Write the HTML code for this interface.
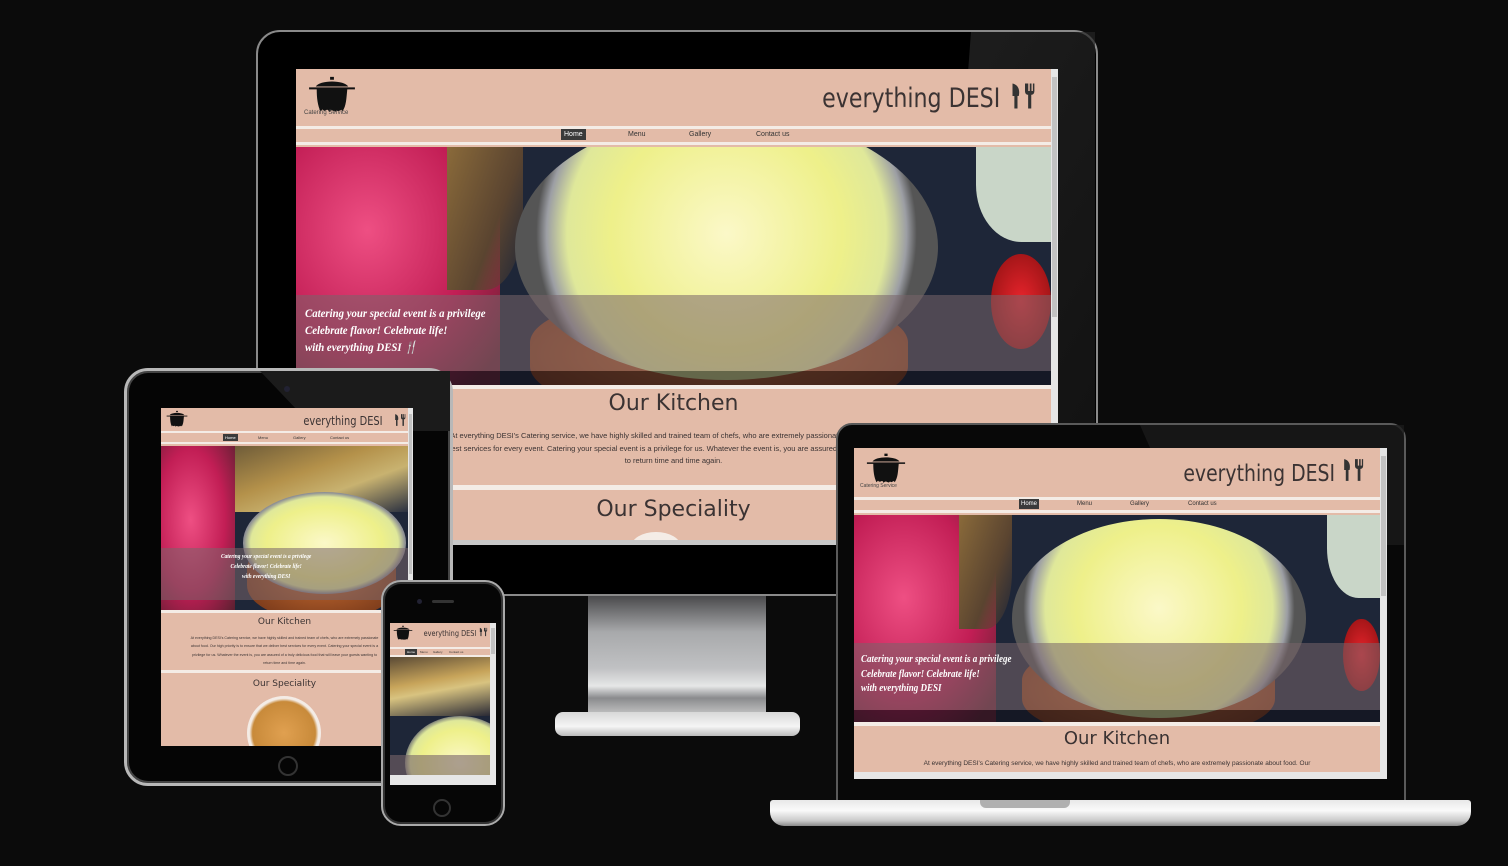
<!DOCTYPE html>
<html><head><meta charset="utf-8">
<style>
*{margin:0;padding:0;box-sizing:border-box}
body{width:1508px;height:866px;overflow:hidden;background:#0b0b0b;position:relative;font-family:"Liberation Sans",sans-serif}
.abs{position:absolute}
.scr{position:absolute;background:#e3bba8;overflow:hidden}
.wl{position:absolute;left:0;right:0;background:#f4ece6}
.title{position:absolute;font-family:"DejaVu Sans","Liberation Sans",sans-serif;color:#3b3333;white-space:nowrap;transform:scaleX(.82);transform-origin:right center}
.nav span{position:absolute;color:#333;white-space:nowrap}
.nav .home{background:#3a3a3a;color:#fff}
.hero{position:absolute;left:0;right:0;overflow:hidden;background:#1e2638}
.hero div{position:absolute}
.cap{font-family:"Liberation Serif",serif;font-style:italic;font-weight:bold;color:#fff;white-space:nowrap;position:absolute;transform:scaleX(.9);transform-origin:left center}
.txt{position:absolute;left:0;right:0;text-align:center;color:#3b3333;white-space:nowrap;overflow:hidden}
.sb{position:absolute;background:#e6e6e6}
</style></head><body>

<svg width="0" height="0" style="position:absolute">
<defs>
<symbol id="pot" viewBox="0 0 50 44"><path d="M23 2h4v3h-4z M8 12 C12 5 38 5 42 12 Z M1 13h48v2H1z M9 15h32 C40 25 40 32 36 38 C34 34 33 40 30 37 C28 41 25 34 22 39 C20 33 18 40 15 36 L13 38 C10 32 9 24 9 15Z" fill="#111"/></symbol>
<symbol id="fk" viewBox="0 0 24 24"><path d="M2 2 C7 3 8 8 7 12 H6 V22 H3.5 V12 H2Z M12 2 V8 C12 10 13 11 14.5 11 V22 H17 V11 C18.5 11 19.5 10 19.5 8 V2 H18.3 V8 H17.2 V2 H15.8 V8 H14.6 V2Z" fill="#333"/></symbol>
</defs></svg>

<!-- Monitor -->
<div class="abs" style="left:256px;top:30px;width:842px;height:566px;border-radius:24px 24px 4px 4px;background:#000;border:2px solid #8a8a8a"></div>
<div class="abs" style="left:940px;top:32px;width:155px;height:420px;background:linear-gradient(120deg,#2a2a2a,#1a1a1a);clip-path:polygon(20% 0,100% 0,100% 100%,0 100%);opacity:.7"></div>
<div class="abs" style="left:588px;top:596px;width:178px;height:120px;background:linear-gradient(#4a4a4c,#a8a9ab 30%,#c0c1c3 60%,#e6e7e7 75%,#8a8b8d 85%,#c8c8c8)"></div>
<div class="abs" style="left:555px;top:712px;width:245px;height:24px;border-radius:8px;background:linear-gradient(#d8d8d8,#f5f5f5 60%,#bbb)"></div>

<!-- Desktop screen -->
<div class="scr" style="left:296px;top:69px;width:762px;height:476px">
 <div class="sb" style="right:0;top:0;width:7px;height:476px"><div class="abs" style="left:1px;top:8px;width:5px;height:240px;background:#c2c2c2"></div></div>
 <svg class="abs" style="left:12px;top:6px" width="48" height="42"><use href="#pot"/></svg>
 <div class="abs" style="left:8px;top:41px;font-size:6px;color:#444">Catering Service</div>
 <div class="title" style="right:58px;top:14px;font-size:27px">everything DESI</div>
 <svg class="abs" style="left:714px;top:12px" width="30" height="30"><use href="#fk"/></svg>
 <div class="wl" style="top:57px;height:3px;right:7px"></div>
 <div class="nav">
  <span class="home" style="left:265px;top:60px;font-size:7px;padding:2px 3px">Home</span>
  <span style="left:332px;top:62px;font-size:7px">Menu</span>
  <span style="left:393px;top:62px;font-size:7px">Gallery</span>
  <span style="left:460px;top:62px;font-size:7px">Contact us</span>
 </div>
 <div class="wl" style="top:73px;height:3px;right:7px"></div>
 <div class="hero" style="top:78px;height:238px;right:7px">
  <div style="left:0;top:0;width:27%;height:100%;background:radial-gradient(ellipse at 35% 35%,#ee4f83,#c21e55 55%,#6b2335 90%)"></div>
  <div style="left:20%;top:0;width:10%;height:60%;background:linear-gradient(110deg,#8a6a3a,#5a4430 60%,transparent);border-radius:0 0 50% 0"></div>
  <div style="right:0;top:0;width:10%;height:40%;background:#c9d6c8;border-radius:0 0 0 60%"></div>
  <div style="right:0;top:45%;width:8%;height:40%;background:radial-gradient(#e8242c,#8a1010);border-radius:50%"></div>
  <div style="left:31%;top:62%;width:50%;height:50%;background:radial-gradient(#c46a30,#7a3516);border-radius:40%"></div>
  <div style="left:29%;top:-14%;width:56%;height:112%;border-radius:50%;background:radial-gradient(circle at 50% 45%,#fbf8c8,#eef08a 45%,#dfe89a 62%,#9c9ea4 70%,#555 74%);"></div>
  <div style="left:0;top:62%;width:100%;height:32%;background:rgba(120,100,105,.55)"></div>
  <div style="left:0;top:94%;width:100%;height:6%;background:rgba(15,15,25,.6)"></div>
  <div class="cap" style="left:9px;top:158px;font-size:12px;line-height:17px">Catering your special event is a privilege<br>Celebrate flavor! Celebrate life!<br>with everything DESI &#x1F374;</div>
 </div>
 <div class="wl" style="top:316px;height:4px;right:7px"></div>
 <div class="txt" style="top:322px;font-size:22px;font-family:'DejaVu Sans',sans-serif;right:7px">Our Kitchen</div>
 <div class="txt" style="top:361px;font-size:7.5px;line-height:12.5px;right:7px">At everything DESI's Catering service, we have highly skilled and trained team of chefs, who are extremely passionate about food. Our<br>high priority is to ensure that we deliver best services for every event. Catering your special event is a privilege for us. Whatever the event is, you are assured of a truly delicious food that will leave your guests wanting<br>to return time and time again.</div>
 <div class="wl" style="top:416px;height:5px;right:7px"></div>
 <div class="txt" style="top:428px;font-size:22px;font-family:'DejaVu Sans',sans-serif;right:7px">Our Speciality</div>
 <div class="abs" style="left:335px;top:463px;width:50px;height:30px;border-radius:50%;background:#f4ece6"></div>
 <div class="abs" style="left:0;top:471px;width:762px;height:5px;background:#c8c8c8"></div>
</div>

<!-- Tablet -->
<div class="abs" style="left:124px;top:368px;width:329px;height:418px;border-radius:24px;background:#050505;border:3px solid #b8b8b8;box-shadow:inset 0 0 0 2px #444"></div>
<div class="abs" style="left:260px;top:371px;width:190px;height:60px;background:#1b1b1b;clip-path:polygon(0 0,100% 0,100% 100%,30% 100%)"></div>
<div class="abs" style="left:284px;top:386px;width:6px;height:6px;border-radius:50%;background:#223"></div>
<div class="abs" style="left:278px;top:756px;width:20px;height:20px;border-radius:50%;border:2px solid #333"></div>
<div class="scr" style="left:161px;top:408px;width:252px;height:338px">
 <div class="sb" style="right:0;top:0;width:5px;height:338px"><div class="abs" style="left:1px;top:6px;width:3px;height:160px;background:#c2c2c2"></div></div>
 <svg class="abs" style="left:5px;top:2px" width="22" height="19"><use href="#pot"/></svg>
 <div class="title" style="right:30px;top:6px;font-size:12px">everything DESI</div>
 <svg class="abs" style="left:233px;top:5px" width="14" height="14"><use href="#fk"/></svg>
 <div class="wl" style="top:23px;height:2px;right:5px"></div>
 <div class="nav">
  <span class="home" style="left:62px;top:26px;font-size:4px;padding:1px 2px">Home</span>
  <span style="left:97px;top:27px;font-size:4px">Menu</span>
  <span style="left:132px;top:27px;font-size:4px">Gallery</span>
  <span style="left:169px;top:27px;font-size:4px">Contact us</span>
 </div>
 <div class="wl" style="top:34px;height:2px;right:5px"></div>
 <div class="hero" style="top:38px;height:164px;right:5px">
  <div style="left:0;top:0;width:100%;height:40%;background:linear-gradient(160deg,#4a4030,#b4914a 50%,#c8b270 70%,#2a3040)"></div>
  <div style="left:0;top:0;width:30%;height:100%;background:radial-gradient(ellipse at 40% 45%,#ee4f83,#c21e55 55%,#5a2030)"></div>
  <div style="left:35%;top:55%;width:60%;height:50%;background:radial-gradient(#c46a30,#6a3016);border-radius:40%"></div>
  <div style="left:33%;top:28%;width:66%;height:62%;border-radius:50%;background:radial-gradient(#fbf8c8,#eef08a 50%,#dfe89a 64%,#8c8e94 70%)"></div>
  <div style="left:0;top:62%;width:100%;height:32%;background:rgba(120,100,105,.55)"></div>
  <div class="cap" style="left:60px;top:106px;font-size:6px;line-height:10px;text-align:center">Catering your special event is a privilege<br>Celebrate flavor! Celebrate life!<br>with everything DESI</div>
 </div>
 <div class="wl" style="top:202px;height:3px;right:5px"></div>
 <div class="txt" style="top:209px;font-size:9px;font-family:'DejaVu Sans',sans-serif;right:5px">Our Kitchen</div>
 <div class="txt" style="top:226px;font-size:3.6px;line-height:8.3px;right:5px">At everything DESI's Catering service, we have highly skilled and trained team of chefs, who are extremely passionate<br>about food. Our high priority is to ensure that we deliver best services for every event. Catering your special event is a<br>privilege for us. Whatever the event is, you are assured of a truly delicious food that will leave your guests wanting to<br>return time and time again.</div>
 <div class="wl" style="top:262px;height:3px;right:5px"></div>
 <div class="txt" style="top:271px;font-size:9px;font-family:'DejaVu Sans',sans-serif;right:5px">Our Speciality</div>
 <div class="abs" style="left:86px;top:288px;width:74px;height:74px;border-radius:50%;background:radial-gradient(#e0a050,#c88a3a 60%,#f4ece6 66%)"></div>
</div>

<!-- Phone -->
<div class="abs" style="left:381px;top:580px;width:124px;height:246px;border-radius:20px;background:#060606;border:2px solid #aaa;box-shadow:inset 0 0 0 2px #333"></div>
<div class="abs" style="left:417px;top:599px;width:5px;height:5px;border-radius:50%;background:#223"></div>
<div class="abs" style="left:432px;top:600px;width:22px;height:3px;border-radius:2px;background:#333"></div>
<div class="abs" style="left:433px;top:799px;width:18px;height:18px;border-radius:50%;border:2px solid #333"></div>
<div class="scr" style="left:390px;top:623px;width:106px;height:162px">
 <div class="sb" style="right:0;top:0;width:6px;height:162px"><div class="abs" style="left:1px;top:5px;width:4px;height:26px;background:#c2c2c2"></div></div>
 <svg class="abs" style="left:3px;top:2px" width="20" height="17"><use href="#pot"/></svg>
 <div class="title" style="right:20px;top:6px;font-size:8px">everything DESI</div>
 <svg class="abs" style="left:89px;top:4px" width="10" height="10"><use href="#fk"/></svg>
 <div class="wl" style="top:24px;height:2px;right:6px"></div>
 <div class="nav">
  <span class="home" style="left:15px;top:26px;font-size:3px;padding:1px 2px">Home</span>
  <span style="left:30px;top:27px;font-size:3px">Menu</span>
  <span style="left:43px;top:27px;font-size:3px">Gallery</span>
  <span style="left:59px;top:27px;font-size:3px">Contact us</span>
 </div>
 <div class="wl" style="top:32px;height:2px;right:6px"></div>
 <div class="hero" style="top:34px;height:118px;right:6px">
  <div style="left:0;top:0;width:100%;height:50%;background:linear-gradient(170deg,#5a4a35,#c7a45a 40%,#d8c380 55%,#2a2a35)"></div>
  <div style="left:15%;top:50%;width:110%;height:80%;border-radius:50%;background:radial-gradient(#fbf8c8,#eef08a 50%,#dfe89a 64%,#6c6e74 72%)"></div>
  <div style="left:0;top:83%;width:100%;height:17%;background:rgba(120,100,105,.6)"></div>
 </div>
 <div class="abs" style="left:0;top:152px;width:106px;height:10px;background:#e6e6e6"></div>
</div>

<!-- Laptop -->
<div class="abs" style="left:836px;top:423px;width:570px;height:380px;border-radius:16px 16px 0 0;background:#080808;border:2px solid #5a5a5a"></div>
<div class="abs" style="left:1140px;top:425px;width:264px;height:120px;background:#1a1a1a;clip-path:polygon(0 0,100% 0,100% 100%,20% 100%);opacity:.8"></div>
<div class="abs" style="left:770px;top:800px;width:701px;height:26px;border-radius:3px 3px 14px 14px;background:linear-gradient(#e8e8e8,#fafafa 40%,#c9c9c9 80%,#8a8a8a)"></div>
<div class="abs" style="left:980px;top:800px;width:90px;height:8px;border-radius:0 0 6px 6px;background:#b0b0b0"></div>
<div class="scr" style="left:854px;top:448px;width:533px;height:331px">
 <div class="sb" style="right:0;top:0;width:7px;height:331px"><div class="abs" style="left:1px;top:8px;width:5px;height:140px;background:#c2c2c2"></div></div>
 <svg class="abs" style="left:12px;top:4px" width="40" height="35"><use href="#pot"/></svg>
 <div class="abs" style="left:6px;top:35px;font-size:5px;color:#444">Catering Service</div>
 <div class="title" style="right:52px;top:13px;font-size:23px">everything DESI</div>
 <svg class="abs" style="left:488px;top:9px" width="26" height="26"><use href="#fk"/></svg>
 <div class="wl" style="top:49px;height:3px;right:7px"></div>
 <div class="nav">
  <span class="home" style="left:165px;top:51px;font-size:6px;padding:2px 2px">Home</span>
  <span style="left:223px;top:53px;font-size:6px">Menu</span>
  <span style="left:276px;top:53px;font-size:6px">Gallery</span>
  <span style="left:334px;top:53px;font-size:6px">Contact us</span>
 </div>
 <div class="wl" style="top:62px;height:3px;right:7px"></div>
 <div class="hero" style="top:67px;height:207px;right:7px">
  <div style="left:0;top:0;width:27%;height:100%;background:radial-gradient(ellipse at 35% 40%,#ee4f83,#c21e55 55%,#6b2335 90%)"></div>
  <div style="left:20%;top:0;width:10%;height:55%;background:linear-gradient(110deg,#8a6a3a,#5a4430 60%,transparent);border-radius:0 0 50% 0"></div>
  <div style="right:0;top:0;width:10%;height:40%;background:#c9d6c8;border-radius:0 0 0 60%"></div>
  <div style="right:0;top:50%;width:7%;height:35%;background:radial-gradient(#e8242c,#8a1010);border-radius:50%"></div>
  <div style="left:32%;top:62%;width:48%;height:45%;background:radial-gradient(#c46a30,#7a3516);border-radius:40%"></div>
  <div style="left:30%;top:2%;width:56%;height:96%;border-radius:50%;background:radial-gradient(circle at 50% 45%,#fbf8c8,#eef08a 45%,#dfe89a 62%,#9c9ea4 70%,#555 74%)"></div>
  <div style="left:0;top:62%;width:100%;height:32%;background:rgba(120,100,105,.55)"></div>
  <div style="left:0;top:94%;width:100%;height:6%;background:rgba(15,15,25,.6)"></div>
  <div class="cap" style="left:7px;top:138px;font-size:10px;line-height:14.5px">Catering your special event is a privilege<br>Celebrate flavor! Celebrate life!<br>with everything DESI</div>
 </div>
 <div class="wl" style="top:274px;height:4px;right:7px"></div>
 <div class="txt" style="top:280px;font-size:18px;font-family:'DejaVu Sans',sans-serif;right:7px">Our Kitchen</div>
 <div class="txt" style="top:312px;font-size:6.5px;right:7px">At everything DESI's Catering service, we have highly skilled and trained team of chefs, who are extremely passionate about food. Our</div>
 <div class="abs" style="left:0;top:324px;width:533px;height:7px;background:#e6e6e6"></div>
</div>

</body></html>
